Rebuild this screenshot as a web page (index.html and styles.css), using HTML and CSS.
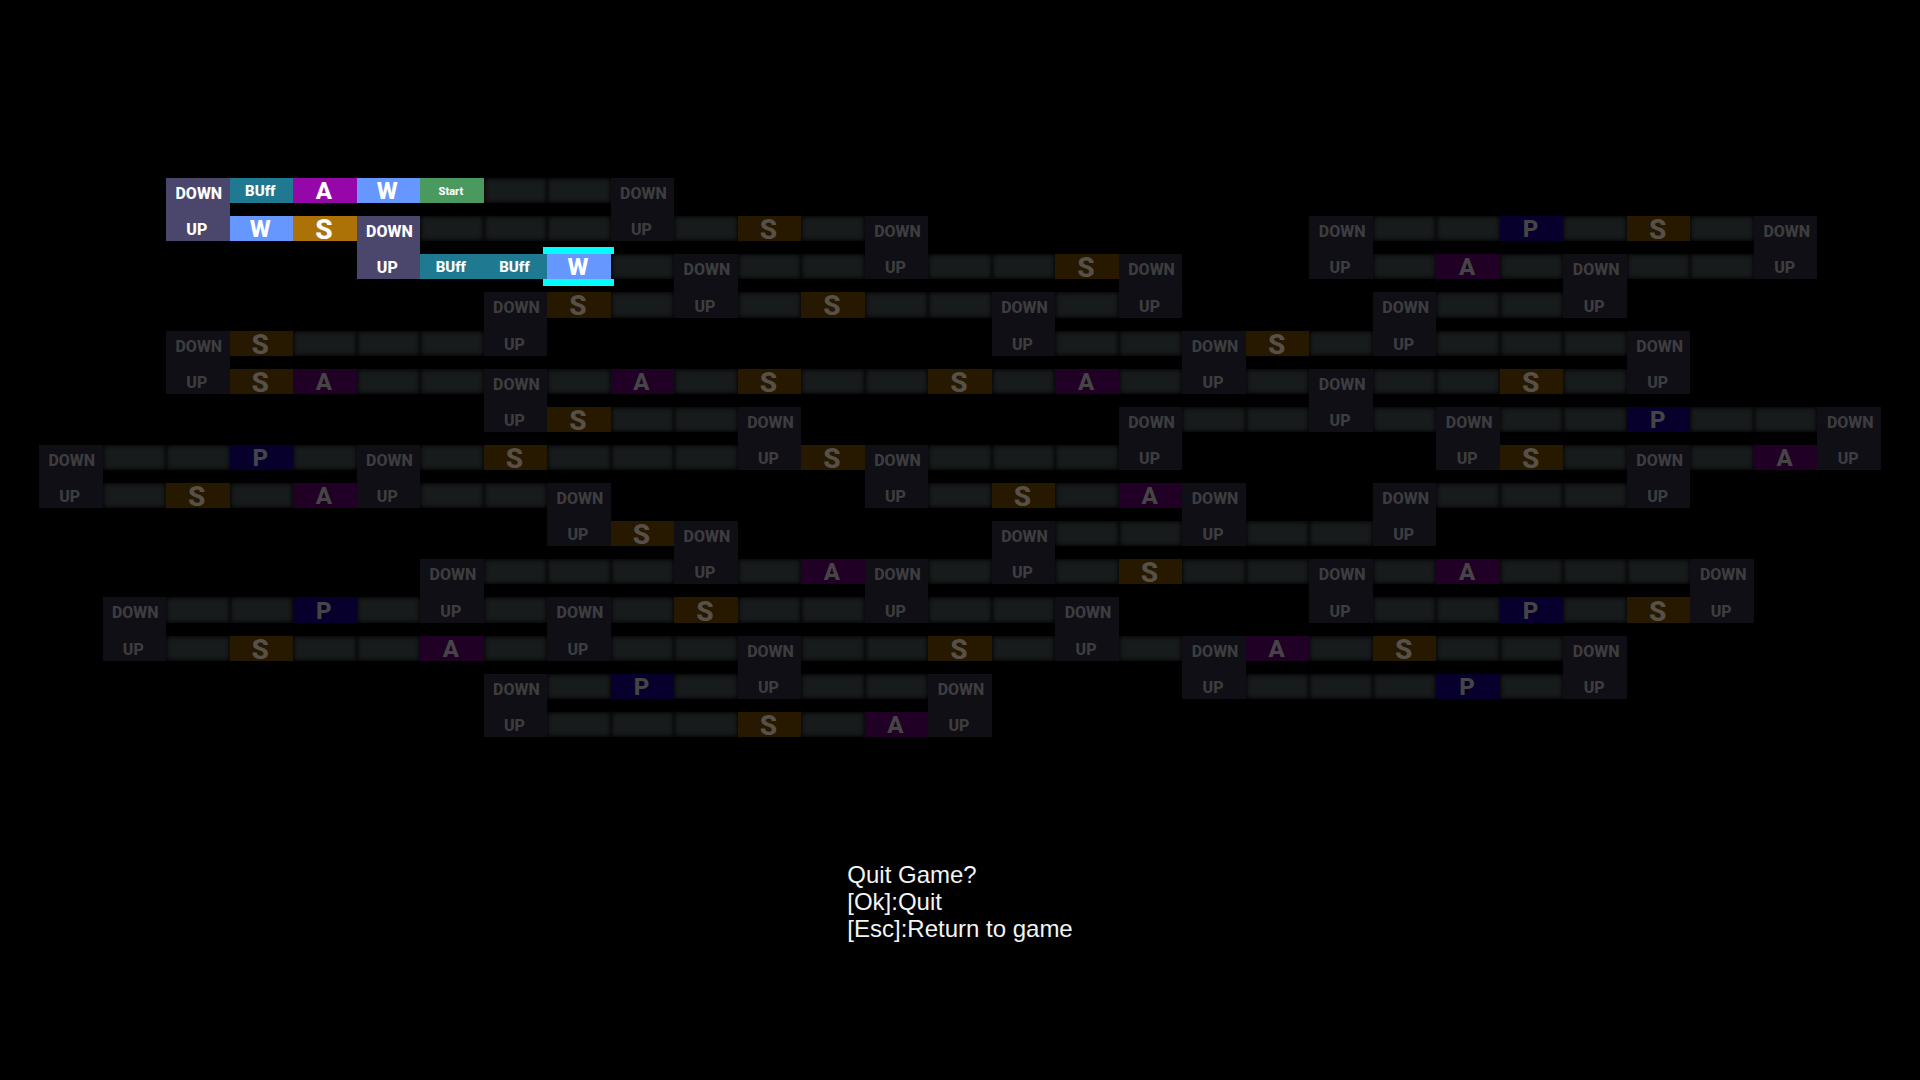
FILE: index.html
```html
<!DOCTYPE html>
<html lang="en">
<head>
<meta charset="utf-8">
<title>Quit Game?</title>
<link rel="stylesheet" href="styles.css">
</head>
<body>
<main class="screen">
  <div class="board" id="board"></div>
  <section class="prompt" aria-labelledby="prompt-title">
    <h1 class="prompt-title" id="prompt-title">Quit Game?</h1>
    <button class="prompt-action" type="button">[Ok]:Quit</button>
    <button class="prompt-action" type="button">[Esc]:Return to game</button>
  </section>
</main>
<script src="board.js"></script>
</body>
</html>
```
FILE: styles.css
```css
body {
  margin: 0;
  background: #000;
  color: #fff;
}

.screen {
  display: flex;
  flex-direction: column;
  align-items: center;
  gap: 124px;
  min-height: 100vh;
  padding: 178px 39px 0;
  box-sizing: border-box;
}

/* Board: 29 columns by 15 rows */
.board {
  display: grid;
  grid-template-columns: repeat(29, minmax(0, 1fr));
  grid-template-rows: repeat(15, minmax(25px, 1fr));
  row-gap: 13px;
  width: 100%;
  min-height: 559px;
  font-family: Roboto, "Liberation Sans", sans-serif;
  font-weight: 800;
}

.tile {
  display: flex;
  align-items: center;
  justify-content: center;
  box-sizing: border-box;
  position: relative;
  line-height: 23px;
}

.empty {
  background: #181b1c;
  box-shadow: inset 0 0 4px 1px #040405;
}

.letter {
  padding: 2px 2px 0 0;
  font-size: 24px;
}

.strong {
  font-size: 28px;
}

.word {
  padding: 2px 2px 0 0;
  font-size: 15px;
}

.small {
  padding: 2px 2px 0 0;
  font-size: 11px;
}

.stairs {
  flex-direction: column;
  justify-content: space-between;
  padding: 4px 2px 0 0;
  font-size: 16px;
}

.stairs-down {
  padding-left: 4px;
}

/* Tiles already reached */
.lit { color: #fff; }
.lit.stairs { background: #4b466b; }
.lit.buff { background: #1f7990; }
.lit.attack { background: #9507a9; }
.lit.walk { background: #6697ff; }
.lit.start { background: #4a9a60; }
.lit.skill { background: #ad7207; }

/* Tiles still hidden */
.dim { color: #454545; }
.dim.stairs { background: #100f16; color: #3d3d3f; }
.dim.attack { background: #200024; }
.dim.skill { background: #261900; color: #565048; }
.dim.power { background: #07002c; }

.selected::after {
  content: "";
  position: absolute;
  z-index: 1;
  inset: -7px -3px -7px -4px;
  border: solid #0ff;
  border-width: 7px 0;
}

.prompt {
  display: flex;
  flex-direction: column;
  align-items: flex-start;
  font-family: "Liberation Sans", Arial, sans-serif;
  font-size: 24px;
  line-height: 27px;
}

.prompt-title,
.prompt-action {
  margin: 0;
  padding: 0;
  border: 0;
  background: none;
  color: #f4f4f4;
  font: inherit;
  text-align: left;
}
```
FILE: board.js
```js
// One character per cell. "." is no tile, "_" an empty tile,
// "|" the lower half of the stairs that start in the row above.
const rows = [
  "..DBAWG__d...................",
  "..|WSD___|_s_d......d__p_s_d.",
  ".....|BBX_d__|__sd..|_a_d__|.",
  ".......ds_|_s__d_|...d__|....",
  "..ds___|.......|__ds_|___d...",
  "..|sa__d_a_s__s_a_|_d__s_|...",
  ".......|s__d.....d__|_d__p__d",
  "d__p_d_s___|sd___|....|s_d_a|",
  "|_s_a|__d....|_s_ad..d___|...",
  "........|sd....d__|__|.......",
  "......d___|_ad_|_s__d_a___d..",
  ".d__p_|_d_s__|__d...|__p_s|..",
  ".|_s__a_|__d__s_|_da_s__d....",
  ".......d_p_|__d...|___p_|....",
  ".......|___s_a|.............."
];

const tiles = {
  _: ["empty", ""],
  B: ["lit buff word", "BUff"],
  A: ["lit attack letter", "A"],
  W: ["lit walk letter", "W"],
  X: ["lit walk letter selected", "W"],
  G: ["lit start small", "Start"],
  S: ["lit skill letter strong", "S"],
  D: ["lit stairs", ""],
  d: ["dim stairs", ""],
  s: ["dim skill letter strong", "S"],
  a: ["dim attack letter", "A"],
  p: ["dim power letter", "P"]
};

const board = document.getElementById("board");

rows.forEach((row, y) => {
  [...row].forEach((key, x) => {
    if (!tiles[key]) return;
    const [names, text] = tiles[key];
    const isStairs = key === "D" || key === "d";
    const tile = document.createElement("div");
    tile.className = "tile " + names;
    tile.style.gridArea = `${y + 1} / ${x + 1} / span ${isStairs ? 2 : 1} / span 1`;
    if (isStairs) {
      tile.innerHTML = '<span class="stairs-down">DOWN</span><span>UP</span>';
    } else {
      tile.textContent = text;
    }
    board.append(tile);
  });
});
```
